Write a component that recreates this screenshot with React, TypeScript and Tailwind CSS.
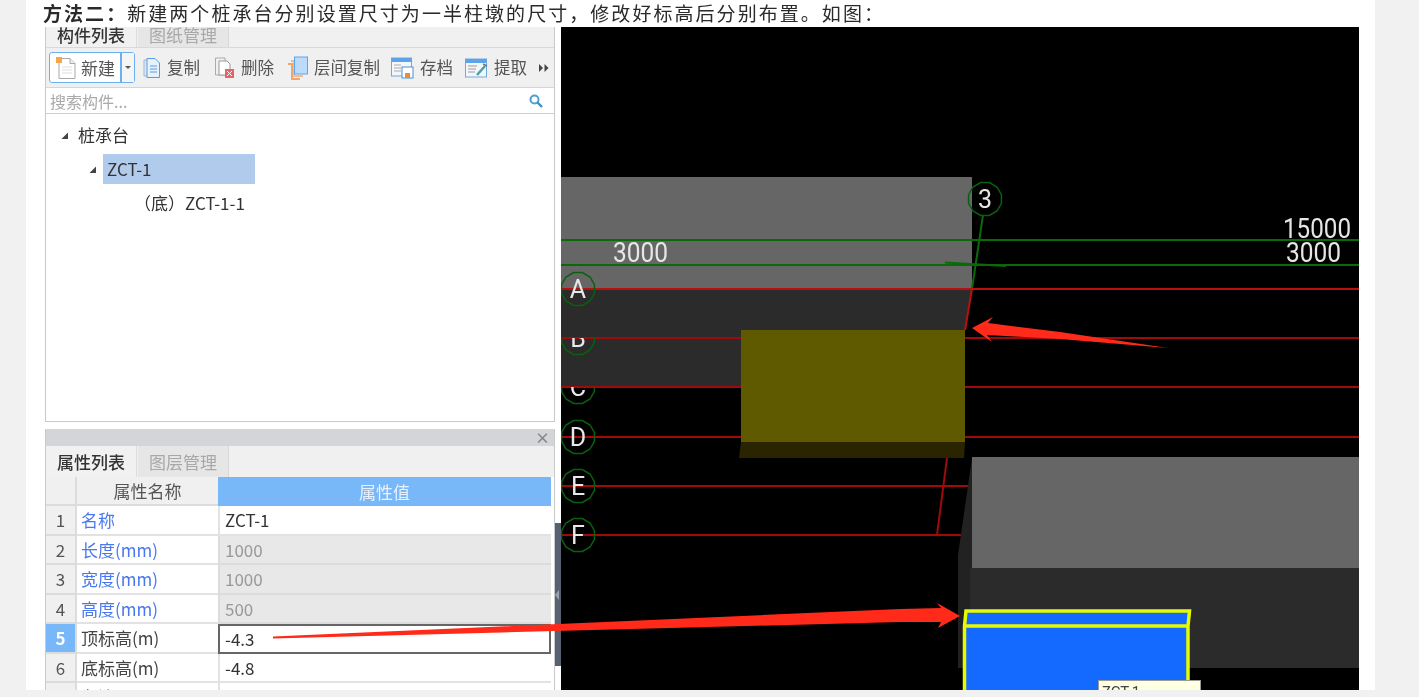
const rows = [
  { n: 1, name: "名称", value: "ZCT-1", blue: true },
  { n: 2, name: "长度(mm)", value: "1000", blue: true, ro: true },
  { n: 3, name: "宽度(mm)", value: "1000", blue: true, ro: true },
  { n: 4, name: "高度(mm)", value: "500", blue: true, ro: true },
  { n: 5, name: "顶标高(m)", value: "-4.3", active: true },
  { n: 6, name: "底标高(m)", value: "-4.8" },
  { n: 7, name: "备注", value: "" },
];

const axes = [
  { label: "A", y: 289, clip: 0 },
  { label: "B", y: 338, clip: 338 },
  { label: "C", y: 387, clip: 387 },
  { label: "D", y: 437, clip: 0 },
  { label: "E", y: 486, clip: 0 },
  { label: "F", y: 535, clip: 0 },
];

function Tabs({ first, second }: { first: string; second: string }) {
  return (
    <div className="flex h-[31px] bg-[#f0f0f0]">
      <div className="flex w-[91px] items-center justify-center border-r border-[#dcdcdc] bg-[#f1f1f1] text-[17px] font-medium text-[#333]">
        {first}
      </div>
      <div className="ml-px flex w-[91px] items-center justify-center border-r border-[#d8d8d8] bg-[#e6e6e6] text-[17px] text-[#a8a8a8]">
        {second}
      </div>
    </div>
  );
}

function Triangle() {
  return (
    <svg width="7" height="7" viewBox="0 0 7 7">
      <path d="M7 0.5V7H0.5Z" fill="#444" />
    </svg>
  );
}

function NewIcon() {
  return (
    <svg width="22" height="24" viewBox="0 0 22 24">
      <path d="M4 2.5H15L20 7.5V22.5H4Z" fill="#fff" stroke="#a8a8a8" />
      <path d="M15 2.5V7.5H20" fill="#eee" stroke="#a8a8a8" />
      <path d="M7 11H17M7 14H17M7 17H17" stroke="#ddd" />
      <rect x="1" y="1" width="6" height="6" fill="#f5a54a" />
    </svg>
  );
}

function CopyIcon() {
  return (
    <svg width="18" height="22" viewBox="0 0 18 22">
      <path d="M1 3H5V19H1Z" fill="#dfe8f2" stroke="#9fb6cf" />
      <path d="M4 1.5H12L16.5 6V20.5H4Z" fill="#e6f1fc" stroke="#5b9bdc" />
      <path d="M7 9H14M7 12H14M7 15H14" stroke="#5b9bdc" />
    </svg>
  );
}

function DeleteIcon() {
  return (
    <svg width="21" height="24" viewBox="0 0 21 24">
      <path d="M1.5 2H11V19H1.5Z" fill="#f0f0f0" stroke="#aaa" />
      <path d="M5 5H13L16 8V19H5Z" fill="#fff" stroke="#999" />
      <rect x="11" y="13" width="9" height="9" fill="#e8626a" />
      <path d="M13 15L18 20M18 15L13 20" stroke="#fff" />
    </svg>
  );
}

function FloorCopyIcon() {
  return (
    <svg width="21" height="24" viewBox="0 0 21 24">
      <path d="M1 8H5V23H13" fill="none" stroke="#f2a56b" strokeWidth="2" />
      <path d="M4 5H7V20H16" fill="none" stroke="#f5bb90" strokeWidth="2" />
      <rect x="7.5" y="1" width="13" height="17" fill="#bcdcff" stroke="#5ea3ea" />
    </svg>
  );
}

function SaveIcon() {
  return (
    <svg width="23" height="22" viewBox="0 0 23 22">
      <rect x="0.5" y="1" width="20" height="18" fill="#f3f7fb" stroke="#6fa9e4" />
      <rect x="0.5" y="1" width="20" height="4" fill="#5ea3ea" />
      <path d="M3 8H10M3 11H10M3 14H10" stroke="#aaa" />
      <rect x="11" y="10" width="11" height="11" fill="#fff" stroke="#4a90d9" />
      <rect x="14" y="16" width="5" height="5" fill="#f08a30" />
    </svg>
  );
}

function ExtractIcon() {
  return (
    <svg width="23" height="22" viewBox="0 0 23 22">
      <rect x="0.5" y="2" width="21" height="18" fill="#f3f7fb" stroke="#6fa9e4" />
      <rect x="0.5" y="2" width="21" height="4" fill="#5ea3ea" />
      <path d="M3 9H12M3 12H11M3 15H10" stroke="#999" />
      <path d="M12 18L20 9" stroke="#4aa3a3" strokeWidth="2.5" />
      <path d="M18 7L22 9" stroke="#777" strokeWidth="1.5" />
    </svg>
  );
}

function SearchIcon() {
  return (
    <svg width="14" height="14" viewBox="0 0 14 14">
      <circle cx="5.5" cy="5.5" r="4" fill="none" stroke="#4f9fd0" strokeWidth="2" />
      <path d="M8.5 8.5L13 13" stroke="#3f8fc0" strokeWidth="2.4" />
    </svg>
  );
}

function MoreIcon() {
  return (
    <svg width="10" height="8" viewBox="0 0 10 8">
      <path d="M0 0L4 4L0 8ZM5.5 0L9.5 4L5.5 8Z" fill="#444" />
    </svg>
  );
}

function ToolItem({ icon, label, className }: { icon: React.ReactNode; label: string; className: string }) {
  return (
    <div className={`flex items-center text-[16.5px] text-[#555] ${className}`}>
      {icon}
      <span className="ml-[6px] whitespace-nowrap">{label}</span>
    </div>
  );
}

function LeftPanel() {
  return (
    <div className="ml-[2px] flex w-[510px] flex-col blur-[0.4px]">
      <div className="h-[395px] overflow-hidden border-x border-b border-[#c9c9c9]">
        <div className="h-[21px] overflow-hidden border-b border-[#d8d8d8] bg-[#f0f0f0]">
          <div className="-mt-[8px]">
            <Tabs first="构件列表" second="图纸管理" />
          </div>
        </div>
        <div className="flex h-[40px] items-center border-b border-[#d5d5d5] bg-[#f0f0f0] pl-[3px]">
          <div className="flex h-[31px] w-[86px] items-center rounded-[3px] border border-[#6db0f2] bg-white pl-[5px] text-[17px] text-[#555]">
            <NewIcon />
            <span className="ml-[4px] flex-1">新建</span>
            <div className="flex h-full w-[14px] items-center justify-center border-l-2 border-[#6db0f2] bg-[#f5f5f5]">
              <div className="h-0 w-0 border-x-[3px] border-t-[3px] border-x-transparent border-t-[#555]" />
            </div>
          </div>
          <ToolItem icon={<CopyIcon />} label="复制" className="ml-[8px]" />
          <ToolItem icon={<DeleteIcon />} label="删除" className="ml-[14px]" />
          <ToolItem icon={<FloorCopyIcon />} label="层间复制" className="ml-[13px]" />
          <ToolItem icon={<SaveIcon />} label="存档" className="ml-[11px]" />
          <ToolItem icon={<ExtractIcon />} label="提取" className="ml-[12px]" />
          <div className="ml-[12px]">
            <MoreIcon />
          </div>
        </div>
        <div className="flex h-[26px] items-center justify-between border-b border-[#d0d0d0] bg-white pl-[4px] pr-[11px] text-[16px] text-[#aaa]">
          <span>搜索构件...</span>
          <SearchIcon />
        </div>
        <div className="pt-[4px] text-[17px] text-[#333]">
          <div className="flex h-[34px] items-center pl-[15px]">
            <Triangle />
            <span className="ml-[10px]">桩承台</span>
          </div>
          <div className="flex h-[34px] items-center pl-[43px]">
            <Triangle />
            <span className="ml-[7px] flex h-[30px] w-[152px] items-center bg-[#b0cbec] pl-[4px]">ZCT-1</span>
          </div>
          <div className="flex h-[34px] items-center pl-[88px]">{"\uFF08底\uFF09ZCT-1-1"}</div>
        </div>
      </div>

      <div className="mt-[7px] border-x border-[#c9c9c9]">
        <div className="flex h-[17px] items-center justify-end bg-[#d3d5d9] pr-[4px] text-[15px] font-bold leading-none text-[#888]">×</div>
        <Tabs first="属性列表" second="图层管理" />
        <div className="grid w-[505px] grid-cols-[31px_141px_333px] text-[17px]">
          <div className="h-[29px] border-r-2 border-b-2 border-[#dcdcdc] bg-[#f0f0f0]" />
          <div className="flex h-[29px] items-center justify-center border-b-2 border-[#dcdcdc] bg-[#f0f0f0] text-[#555]">属性名称</div>
          <div className="flex h-[29px] items-center justify-center bg-[#78b7f8] text-[#e8f2fd]">属性值</div>
          {rows.map((r) => (
            <Row key={r.n} {...r} />
          ))}
        </div>
      </div>
    </div>
  );
}

function Row({ n, name, value, blue, ro, active }: { n: number; name: string; value: string; blue?: boolean; ro?: boolean; active?: boolean }) {
  return (
    <>
      <div className={`flex h-[29.5px] items-center justify-center border-r-2 border-b-2 border-[#dcdcdc] ${active ? "bg-[#78b7f8] font-bold text-white" : "bg-[#f0f0f0] text-[#555]"}`}>
        {n}
      </div>
      <div className={`flex h-[29.5px] items-center border-b-2 border-[#e2e2e2] pl-[4px] ${blue ? "text-[#4a78ee]" : "text-[#444]"}`}>{name}</div>
      <div
        className={`flex h-[29.5px] items-center pl-[5px] ${
          active
            ? "border-2 border-[#666] bg-white text-[#333]"
            : ro
              ? "border-b-2 border-l-2 border-[#dcdcdc] bg-[#e8e8e8] text-[#999]"
              : "border-b-2 border-l-2 border-[#e2e2e2] bg-white text-[#333]"
        }`}
      >
        {value}
      </div>
    </>
  );
}

function Heptagon({ cx, cy, r = 17 }: { cx: number; cy: number; r?: number }) {
  const pts = Array.from({ length: 12 }, (_, i) => {
    const a = (Math.PI * 2 * i) / 12 + Math.PI / 12;
    return `${cx + r * Math.cos(a)},${cy + r * Math.sin(a)}`;
  }).join(" ");
  return <polygon points={pts} fill="none" stroke="#0a600e" strokeWidth="1.5" />;
}

function CadView() {
  const red = "#a00a0a";
  const green = "#0a6a0a";
  return (
    <svg className="h-[663px] w-[798px] shrink-0 bg-black blur-[0.4px]" viewBox="561 27 798 663">
      <defs>
        <clipPath id="clipB">
          <rect x="561" y="338" width="40" height="30" />
        </clipPath>
        <clipPath id="clipC">
          <rect x="561" y="387" width="40" height="30" />
        </clipPath>
      </defs>
      <rect x="561" y="177" width="411" height="112" fill="#666" />
      <polygon points="561,289 972,289 966,330 741,330 741,387 561,387" fill="#2b2b2b" />

      <line x1="561" y1="240" x2="1359" y2="240" stroke={green} strokeWidth="2" />
      <line x1="561" y1="265" x2="1359" y2="265" stroke={green} strokeWidth="2" />
      <line x1="945" y1="262.5" x2="1006" y2="266" stroke={green} strokeWidth="2" />
      <line x1="983" y1="215" x2="972" y2="289" stroke={green} strokeWidth="2" />
      <line x1="972" y1="289" x2="965" y2="330" stroke="#b80f0f" strokeWidth="2" />
      <line x1="947" y1="458" x2="937" y2="535" stroke={red} strokeWidth="2" />

      {axes.map((a) => (
        <line key={a.y} x1="561" y1={a.y} x2={a.y > 450 ? 968 : 1359} y2={a.y} stroke={a.y === 289 ? "#b80f0f" : red} strokeWidth="2" />
      ))}

      {axes.map((a) => (
        <g key={a.label} clipPath={a.clip === 338 ? "url(#clipB)" : a.clip === 387 ? "url(#clipC)" : undefined}>
          <Heptagon cx={578} cy={a.y} />
          <text x="578" y={a.y + 9} textAnchor="middle" fontFamily="Roboto, sans-serif" fontSize="25" fill="#e8e8e8">
            {a.label}
          </text>
        </g>
      ))}

      <Heptagon cx={985} cy={199} />
      <text x="985" y="208" textAnchor="middle" fontFamily="Roboto, sans-serif" fontSize="25" fill="#e8e8e8">3</text>

      <text x="613" y="262" fontFamily="Roboto, sans-serif" fontSize="27" fill="#e6e6e6" textLength="55" lengthAdjust="spacingAndGlyphs">3000</text>
      <text x="1283" y="238" fontFamily="Roboto, sans-serif" fontSize="27" fill="#e6e6e6" textLength="68" lengthAdjust="spacingAndGlyphs">15000</text>
      <text x="1286" y="262" fontFamily="Roboto, sans-serif" fontSize="27" fill="#e6e6e6" textLength="55" lengthAdjust="spacingAndGlyphs">3000</text>

      <rect x="741" y="330" width="224" height="112" fill="#5f5a00" />
      <polygon points="741,442 965,442 964,458 739,458" fill="#2a2500" />

      <polygon points="972,458 958,555 958,668 972,668" fill="#222" />
      <rect x="972" y="457" width="387" height="111" fill="#666" />
      <rect x="970" y="568" width="389" height="100" fill="#2b2b2b" />

      <polygon points="966,610 1190,610 1188,626 1188,690 964,690 964,626" fill="#1469ff" />
      <path d="M964.5 690V626L966 611H1189.5L1188 626V690M964.5 626H1188" fill="none" stroke="#e6fb00" strokeWidth="3.5" />

      <rect x="1098.5" y="680.5" width="102" height="20" fill="#ffffe1" stroke="#999" />
      <text x="1102" y="697" fontFamily="Roboto, sans-serif" fontSize="15" fill="#444">ZCT-1</text>
    </svg>
  );
}

export default function App() {
  return (
    <div className="relative h-[697px] overflow-hidden bg-[#f1f1f1] font-['Noto_Sans_CJK_SC',sans-serif]">
      <div className="ml-[26px] h-[690px] w-[1349px] overflow-hidden bg-white">
        <div className="flex h-[27px] items-center whitespace-nowrap pl-[17px] text-[19px] tracking-[2.05px] text-[#2a2a2a] blur-[0.3px]">
          <b className="font-bold">{"方法二\uFF1A"}</b>
          <span>{"新建两个桩承台分别设置尺寸为一半柱墩的尺寸\uFF0C修改好标高后分别布置。如图\uFF1A"}</span>
        </div>
        <div className="flex pl-[17px]">
          <LeftPanel />
          <div className="w-[6px] shrink-0 pt-[496px]">
            <div className="flex h-[143px] items-center bg-[#566270]">
              <div className="h-0 w-0 border-y-[5px] border-r-[4px] border-y-transparent border-r-[#9aa3ad]" />
            </div>
          </div>
          <CadView />
        </div>
      </div>

      <svg className="pointer-events-none absolute left-0 top-0 h-[697px] w-[1419px] blur-[0.3px]" viewBox="0 0 1419 697">
        <polygon points="972,328 993,317 988,323 1060,332 1168,348 1060,339 987,335 992,342" fill="#ff2a1a" />
        <polygon points="273,636.5 900,609 941,608 937,603 960,616 938,628 941,622 900,622 273,638.5" fill="#ff2a1a" />
      </svg>
    </div>
  );
}
